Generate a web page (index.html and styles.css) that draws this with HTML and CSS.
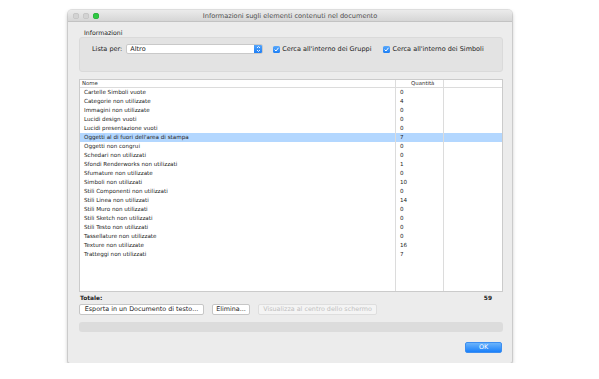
FILE: index.html
```html
<!DOCTYPE html>
<html lang="it">
<head>
<meta charset="utf-8">
<title>Informazioni sugli elementi contenuti nel documento</title>
<link rel="stylesheet" href="styles.css">
</head>
<body>
<div class="window">
  <div class="titlebar">
    <div class="lights"><span class="light"></span><span class="light"></span><span class="light green"></span></div>
    <div class="title">Informazioni sugli elementi contenuti nel documento</div>
    <div></div>
  </div>
  <div class="content">
    <div class="group-label">Informazioni</div>
    <div class="groupbox">
      <div class="options">
        <span class="opt-label">Lista per:</span>
        <div class="popup">
          <span class="popup-text">Altro</span>
          <span class="stepper"><svg viewBox="0 0 9 10" width="9" height="10"><path d="M3 4 L4.5 2.5 L6 4 M3 6 L4.5 7.5 L6 6" fill="none" stroke="#fff" stroke-width="0.9"/></svg></span>
        </div>
        <span class="check"><span class="box"><svg viewBox="0 0 7 7" width="7" height="7"><path d="M1.6 3.6 L3 5 L5.5 1.8" fill="none" stroke="#fff" stroke-width="1"/></svg></span>Cerca all'interno dei Gruppi</span>
        <span class="check check2"><span class="box"><svg viewBox="0 0 7 7" width="7" height="7"><path d="M1.6 3.6 L3 5 L5.5 1.8" fill="none" stroke="#fff" stroke-width="1"/></svg></span>Cerca all'interno dei Simboli</span>
      </div>
    </div>
    <div class="table">
      <div class="row head"><div class="cell">Nome</div><div class="cell qty-head">Quantità</div><div class="cell"></div></div>
      <div class="row"><div class="cell">Cartelle Simboli vuote</div><div class="cell">0</div><div class="cell"></div></div>
      <div class="row"><div class="cell">Categorie non utilizzate</div><div class="cell">4</div><div class="cell"></div></div>
      <div class="row"><div class="cell">Immagini non utilizzate</div><div class="cell">0</div><div class="cell"></div></div>
      <div class="row"><div class="cell">Lucidi design vuoti</div><div class="cell">0</div><div class="cell"></div></div>
      <div class="row"><div class="cell">Lucidi presentazione vuoti</div><div class="cell">0</div><div class="cell"></div></div>
      <div class="row selected"><div class="cell">Oggetti al di fuori dell'area di stampa</div><div class="cell">7</div><div class="cell"></div></div>
      <div class="row"><div class="cell">Oggetti non congrui</div><div class="cell">0</div><div class="cell"></div></div>
      <div class="row"><div class="cell">Schedari non utilizzati</div><div class="cell">0</div><div class="cell"></div></div>
      <div class="row"><div class="cell">Sfondi Renderworks non utilizzati</div><div class="cell">1</div><div class="cell"></div></div>
      <div class="row"><div class="cell">Sfumature non utilizzate</div><div class="cell">0</div><div class="cell"></div></div>
      <div class="row"><div class="cell">Simboli non utilizzati</div><div class="cell">10</div><div class="cell"></div></div>
      <div class="row"><div class="cell">Stili Componenti non utilizzati</div><div class="cell">0</div><div class="cell"></div></div>
      <div class="row"><div class="cell">Stili Linea non utilizzati</div><div class="cell">14</div><div class="cell"></div></div>
      <div class="row"><div class="cell">Stili Muro non utilizzati</div><div class="cell">0</div><div class="cell"></div></div>
      <div class="row"><div class="cell">Stili Sketch non utilizzati</div><div class="cell">0</div><div class="cell"></div></div>
      <div class="row"><div class="cell">Stili Testo non utilizzati</div><div class="cell">0</div><div class="cell"></div></div>
      <div class="row"><div class="cell">Tassellature non utilizzate</div><div class="cell">0</div><div class="cell"></div></div>
      <div class="row"><div class="cell">Texture non utilizzate</div><div class="cell">16</div><div class="cell"></div></div>
      <div class="row"><div class="cell">Tratteggi non utilizzati</div><div class="cell">7</div><div class="cell"></div></div>
      <div class="row filler"><div class="cell"></div><div class="cell"></div><div class="cell"></div></div>
    </div>
    <div class="total"><span>Totale:</span><span class="total-num">59</span></div>
    <div class="buttons">
      <button class="btn btn-export">Esporta in un Documento di testo...</button>
      <button class="btn btn-del">Elimina...</button>
      <button class="btn btn-view" disabled>Visualizza al centro dello schermo</button>
    </div>
    <div class="progress"></div>
    <div class="footer"><button class="btn ok">OK</button></div>
  </div>
</div>
</body>
</html>
```

FILE: styles.css
```css
* { box-sizing: border-box; }
html, body { margin: 0; padding: 0; }
body {
  background: #fff;
  padding: 10px 0 0 68px;
  font-family: "DejaVu Sans", "Liberation Sans", sans-serif;
  color: #222;
}
.window {
  width: 444px;
  height: 353px;
  background: #ececec;
  border-radius: 4px 4px 2px 2px;
  box-shadow: 0 0 0 1px rgba(0,0,0,0.10), 0 2px 4px rgba(0,0,0,0.28);
  display: flex;
  flex-direction: column;
  overflow: hidden;
}
.titlebar {
  height: 12px;
  display: grid;
  grid-template-columns: 1fr auto 1fr;
  align-items: center;
  background: linear-gradient(#ebebeb, #d6d6d6);
  border-bottom: 1px solid #c3c3c3;
}
.lights { display: flex; gap: 4px; padding-left: 5px; }
.light {
  width: 6px; height: 6px; border-radius: 50%;
  background: #d3d3d3;
  box-shadow: inset 0 0 0 0.5px #bdbdbd;
}
.light.green { background: #2fc842; box-shadow: inset 0 0 0 0.5px #1fa632; }
.title { font-size: 6.6px; color: #4d4d4d; white-space: nowrap; }
.content {
  flex: 1;
  display: flex;
  flex-direction: column;
  padding: 0 9px 0 11px;
}
.group-label {
  font-size: 6.2px;
  line-height: 8px;
  margin: 7px 0 0 5px;
  color: #222;
}
.groupbox {
  height: 35px;
  background: #e3e3e3;
  border: 1px solid #dadada;
  border-radius: 3px;
  padding: 6px 0 0 12px;
}
.options { display: flex; align-items: center; font-size: 6.5px; white-space: nowrap; }
.opt-label { margin-right: 4px; }
.popup {
  width: 137px; height: 10px;
  background: #fff;
  border: 1px solid #c9c9c9;
  border-radius: 2px;
  display: flex;
  align-items: center;
  justify-content: space-between;
  overflow: hidden;
}
.popup-text { padding-left: 3px; }
.stepper {
  width: 9px; height: 10px; margin: -1px -1px -1px 0;
  background: linear-gradient(#5aa9fb, #1779f4);
  border-radius: 0 2px 2px 0;
  display: flex;
}
.check { display: flex; align-items: center; gap: 2px; margin-left: 10px; }
.check2 { margin-left: 12px; }
.box {
  width: 7px; height: 7px; border-radius: 1.5px;
  background: linear-gradient(#5aa9fb, #1e7ff5);
  display: flex;
}
.table {
  margin-top: 7px;
  height: 213px;
  background: #fff;
  border: 1px solid #cbcbcb;
  display: flex;
  flex-direction: column;
  font-size: 5.6px;
}
.row {
  display: grid;
  grid-template-columns: 316px 48px 1fr;
  height: 9px;
  line-height: 9px;
  flex: none;
}
.row .cell { white-space: nowrap; overflow: hidden; }
.row .cell:nth-child(1) { padding-left: 4px; border-right: 1px solid #dcdcdc; }
.row .cell:nth-child(2) { padding-left: 4px; border-right: 1px solid #dcdcdc; }
.row.head { height: 8px; line-height: 7px; border-bottom: 1px solid #dcdcdc; color: #333; font-size: 5.4px; }
.row.head .cell:nth-child(1) { padding-left: 2px; }
.row.head .qty-head { padding-left: 15px; }
.row.selected { background: #b3d7ff; }
.row.filler { flex: 1; }
.total {
  display: flex;
  justify-content: space-between;
  font-size: 5.9px;
  font-weight: bold;
  line-height: 8px;
  margin-top: 2px;
  padding: 0 11px 0 1px;
}
.buttons { display: flex; gap: 8px; margin-top: 2px; }
.btn {
  font-family: inherit;
  font-size: 6.4px;
  height: 11px;
  padding: 0 2px;
  background: #fff;
  border: 1px solid #c6c6c6;
  border-radius: 2px;
  color: #222;
  line-height: 9px;
  white-space: nowrap;
}
.btn-export { width: 125px; }
.btn-del { width: 38px; }
.btn-view { width: 119px; color: #bfbfbf; border-color: #dedede; background: #f4f4f4; }
.progress {
  margin-top: 7px;
  height: 10px;
  background: #dcdcdc;
  border-radius: 3px;
}
.footer { display: flex; justify-content: flex-end; margin-top: 10px; padding-right: 1px; }
.ok {
  width: 37px;
  background: linear-gradient(#6cb4fb, #1a80fa);
  border-color: #3d8ef0;
  color: #fff;
}
```
